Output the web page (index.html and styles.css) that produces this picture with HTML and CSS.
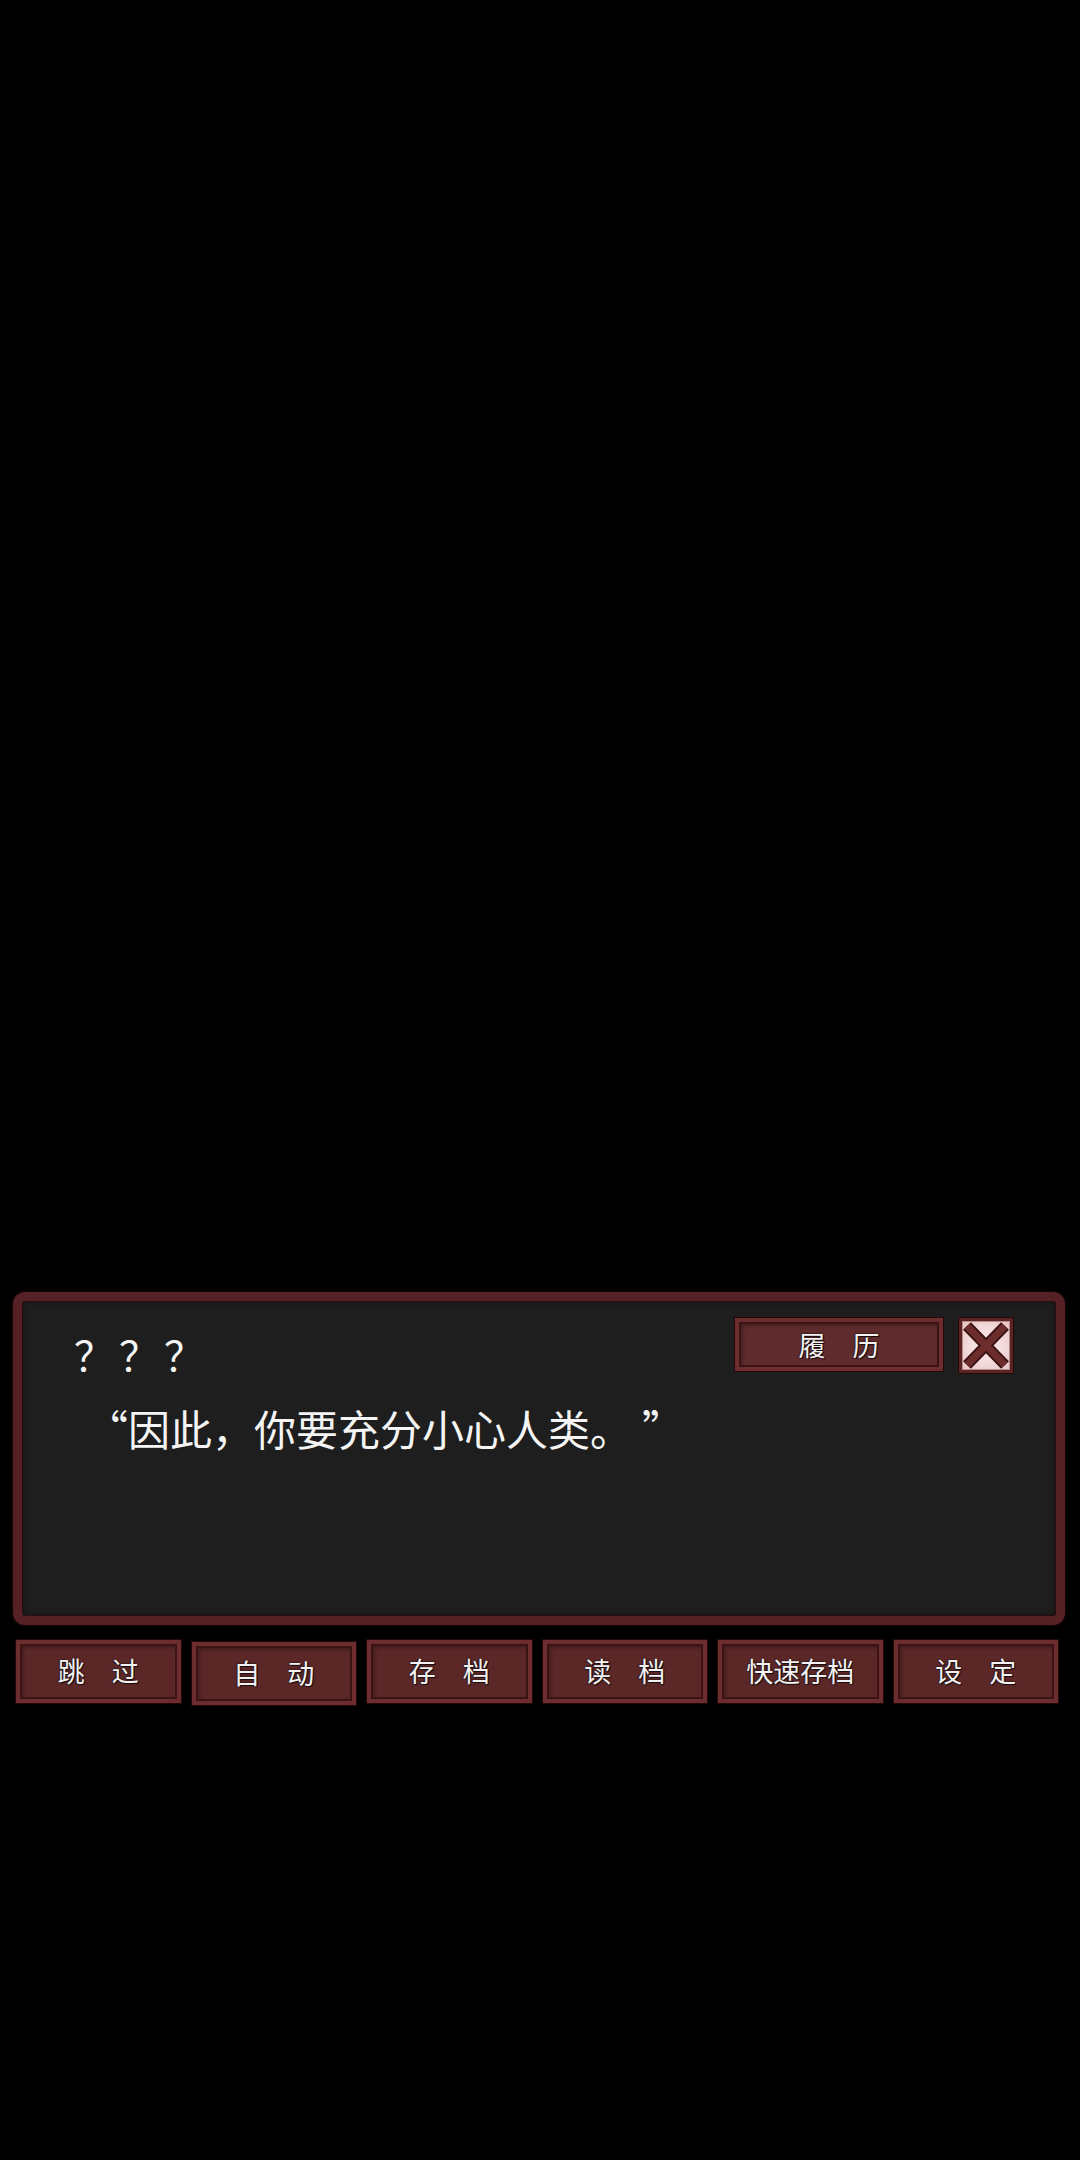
FILE: index.html
```html
<!DOCTYPE html>
<html lang="zh-CN">
<head>
    <meta charset="UTF-8">
    <meta name="viewport" content="width=device-width, initial-scale=1.0">
    <title>对话</title>
    <link rel="stylesheet" href="styles.css">
</head>
<body>

<div class="screen">
    <div class="dialog">
        <div class="dialog-head">
            <div class="speaker">？？？</div>
            <div class="tools">
                <button class="log-btn">履　历</button>
                <button class="close-btn" aria-label="关闭">
                    <svg viewBox="0 0 48 49" width="48" height="49">
                        <path d="M5 5 L43 44 M43 5 L5 44" stroke="#3a1212" stroke-width="11" stroke-linecap="butt"/>
                        <path d="M5 5 L43 44 M43 5 L5 44" stroke="#6e2d2d" stroke-width="7" stroke-linecap="butt"/>
                    </svg>
                </button>
            </div>
        </div>
        <p class="line"><span class="quote-open">“</span>因此，你要充分小心人类。<span class="quote-close">”</span></p>
    </div>

    <div class="menu">
        <button class="menu-btn">跳　过</button>
        <button class="menu-btn shifted">自　动</button>
        <button class="menu-btn">存　档</button>
        <button class="menu-btn">读　档</button>
        <button class="menu-btn">快速存档</button>
        <button class="menu-btn">设　定</button>
    </div>
</div>

</body>
</html>
```

FILE: styles.css
```css
body {
    margin: 0;
    background-color: #000;
    font-family: "Noto Sans CJK SC", "Noto Sans", sans-serif;
    color: #fff;
}
.screen {
    height: 2160px;
    padding-top: 1292px;
    box-sizing: border-box;
}
.dialog {
    margin: 0 15px 0 13px;
    height: 333px;
    box-sizing: border-box;
    border: 9px solid #552124;
    border-radius: 12px;
    background-color: #1e1e1e;
    box-shadow: 0 0 3px 1px #1a0506, inset 0 0 0 1px #2a0c0e, inset 0 0 6px #111;
}
.dialog-head {
    display: flex;
    justify-content: space-between;
    align-items: flex-start;
    padding: 17px 43px 0 0;
}
.speaker {
    margin-top: 12px;
    padding-left: 52px;
    font-size: 40px;
    line-height: 48px;
    letter-spacing: 5px;
    color: #f4f4f4;
}
.tools {
    display: flex;
    gap: 16px;
}
.line {
    margin: 26px 0 0 64px;
    font-size: 42px;
    line-height: 48px;
    color: #f4f4f4;
}
.quote-open,
.quote-close {
    display: inline-block;
    width: 1em;
}
.quote-open {
    text-align: right;
    padding-right: 2px;
    box-sizing: border-box;
}
.quote-close {
    text-align: left;
    padding-left: 10px;
    box-sizing: border-box;
}

/* 按钮 */
button {
    font-family: inherit;
    cursor: pointer;
    padding: 0;
}
.log-btn,
.menu-btn {
    box-sizing: border-box;
    border: 4px solid #6d2c2e;
    background-color: #5b2727;
    box-shadow: 0 0 0 1px #240809, inset 0 0 0 2px #3a1315, inset 3px 3px 4px rgba(0, 0, 0, 0.35);
    color: #f2f2f2;
    font-size: 27px;
    line-height: 1;
    text-shadow: 1px 1px 0 #1c0c0c, 0 0 2px #000;
}
.log-btn {
    width: 208px;
    height: 53px;
    background-color: #5f2b2c;
}
.close-btn {
    width: 54px;
    height: 55px;
    box-sizing: border-box;
    border: 3px solid #5a2324;
    background: radial-gradient(circle, #f7e0e0 40%, #e6c2c2 100%);
    box-shadow: 0 0 0 1px #260a0a, inset 0 0 0 1px #b88b8b;
    display: flex;
    align-items: center;
    justify-content: center;
}
.close-btn svg {
    display: block;
}
.menu {
    display: grid;
    grid-template-columns: repeat(6, 1fr);
    gap: 11px;
    margin: 15px 22px 0 16px;
}
.menu-btn {
    height: 63px;
    padding-bottom: 2px;
}
.menu-btn.shifted {
    margin-top: 2px;
}
```
